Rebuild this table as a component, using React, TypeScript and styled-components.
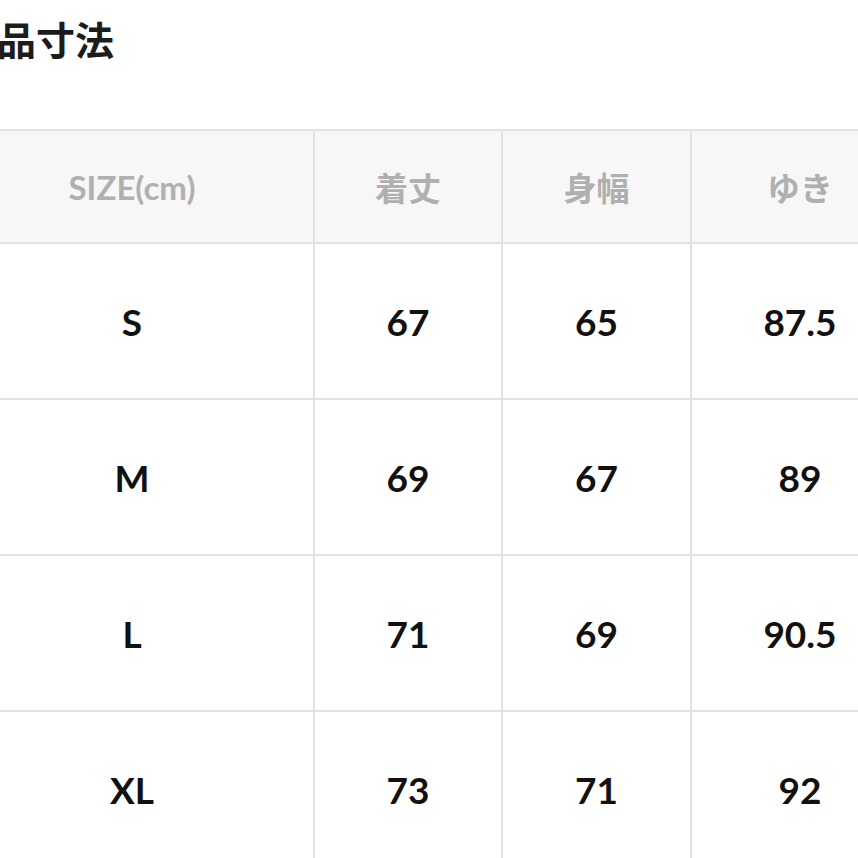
import React from "react";
import styled, { createGlobalStyle } from "styled-components";

const GlobalStyle = createGlobalStyle`
  html, body {
    margin: 0;
    padding: 0;
    background: #ffffff;
    overflow: hidden;
  }
  body {
    font-family: Lato, "Noto Sans CJK JP", sans-serif;
  }
`;

const COLUMNS = ["SIZE(cm)", "着丈", "身幅", "ゆき"];

const ROWS = [
  ["S", "67", "65", "87.5"],
  ["M", "69", "67", "89"],
  ["L", "71", "69", "90.5"],
  ["XL", "73", "71", "92"],
];

const App: React.FC = () => {
  return (
    <Page>
      <GlobalStyle />
      <Title>商品寸法</Title>
      <SizeTable>
        {COLUMNS.map((col, i) => (
          <HeadCell key={col} first={i === 0}>
            {col}
          </HeadCell>
        ))}
        {ROWS.map((row) =>
          row.map((value, i) => (
            <BodyCell key={row[0] + i} first={i === 0}>
              {value}
            </BodyCell>
          ))
        )}
      </SizeTable>
    </Page>
  );
};

export default App;

const Page = styled.div`
  width: 858px;
  height: 858px;
  overflow: hidden;
  padding-top: 19px;
  box-sizing: border-box;
`;

const Title = styled.h1`
  margin: 0 0 71px -42px;
  font-family: "Noto Sans CJK JP", sans-serif;
  font-size: 39px;
  line-height: 39px;
  font-weight: 700;
  color: #1c1c1c;
  letter-spacing: 0;
`;

const SizeTable = styled.div`
  display: grid;
  grid-template-columns: 362px 188px 189px 218px;
  grid-template-rows: 113px repeat(4, 156px);
  margin-left: -49px;
  border-top: 2px solid #e2e2e2;
`;

const Cell = styled.div<{ first?: boolean }>`
  display: flex;
  align-items: center;
  justify-content: center;
  box-sizing: border-box;
  border-bottom: 2px solid #e2e2e2;
  border-left: ${(p) => (p.first ? "none" : "2px solid #e2e2e2")};
`;

const HeadCell = styled(Cell)`
  background: #f7f7f7;
  color: #b0b0b0;
  font-family: Lato, "Noto Sans CJK JP", sans-serif;
  font-size: 33px;
  font-weight: 700;
`;

const BodyCell = styled(Cell)`
  background: #ffffff;
  color: #111111;
  font-family: Lato, sans-serif;
  font-size: 37px;
  font-weight: 700;
`;
